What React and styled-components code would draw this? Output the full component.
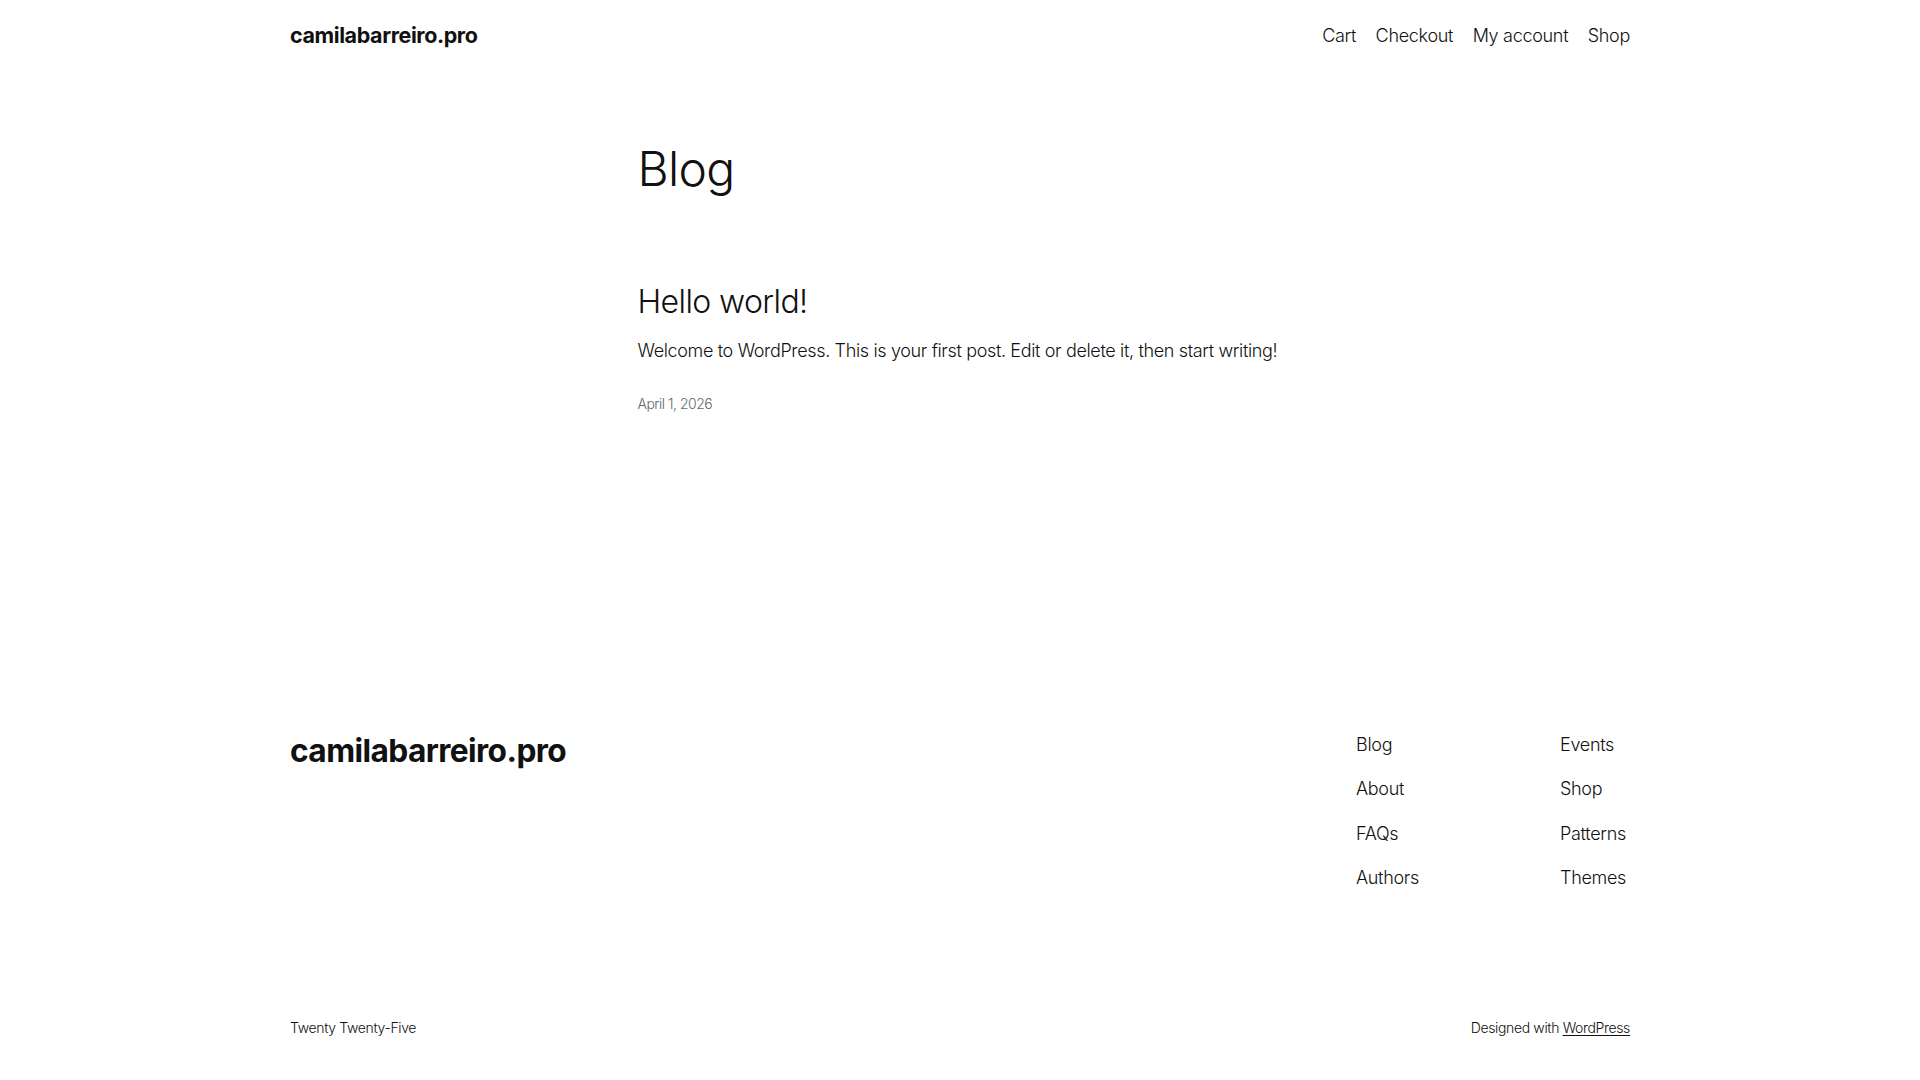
import React from 'react';
import styled, { createGlobalStyle } from 'styled-components';

const GlobalStyle = createGlobalStyle`
  * { box-sizing: border-box; }
  html, body {
    margin: 0;
    padding: 0;
    background: #ffffff;
  }
  body {
    font-family: Inter, "Noto Sans", "Liberation Sans", sans-serif;
    color: #111111;
    font-size: 18px;
    line-height: 1.4;
    letter-spacing: -0.1px;
    -webkit-font-smoothing: antialiased;
  }
  a { color: inherit; text-decoration: none; }
`;

const Page = styled.div`
  width: 100%;
  min-height: 1080px;
  display: flex;
  flex-direction: column;
`;

const Wide = styled.div`
  width: 1340px;
  margin: 0 auto;
`;

const Header = styled(Wide)`
  display: flex;
  align-items: center;
  justify-content: space-between;
  padding-top: 23px;
`;

const SiteTitle = styled.a`
  font-size: ${p => p.$size}px;
  font-weight: 700;
  line-height: 1.2;
  letter-spacing: ${p => p.$spacing}px;
`;

const Nav = styled.nav`
  display: flex;
  gap: 19.5px;
  font-size: 18px;
  font-weight: 300;
  line-height: 1.4;
  letter-spacing: -0.3px;
`;

const Main = styled.main`
  width: 645px;
  margin: 0 auto;
  padding-top: 93px;
  flex: 1;
`;

const PageTitle = styled.h1`
  margin: 0;
  font-size: 48px;
  font-weight: 300;
  line-height: 1.125;
  letter-spacing: -0.7px;
`;

const Post = styled.article`
  margin-top: 88px;
`;

const PostTitle = styled.h2`
  margin: 0;
  font-size: 32px;
  font-weight: 300;
  line-height: 1.125;
  letter-spacing: -0.6px;
`;

const Excerpt = styled.p`
  margin: 18px 0 0;
  font-size: 18px;
  font-weight: 300;
  line-height: 1.4;
  letter-spacing: -0.35px;
`;

const PostDate = styled.div`
  margin-top: 31px;
  font-size: 14px;
  font-weight: 300;
  line-height: 1.4;
  color: #686868;
  letter-spacing: -0.5px;
`;

const Footer = styled(Wide)`
  display: flex;
  justify-content: space-between;
  align-items: flex-start;
`;

const FooterNavs = styled.div`
  display: flex;
`;

const FooterColumn = styled.ul`
  list-style: none;
  margin: 0;
  padding: 0;
  width: ${p => p.$width}px;
  display: flex;
  flex-direction: column;
  gap: 19.2px;
  font-size: 18px;
  font-weight: 300;
  line-height: 1.4;
  letter-spacing: -0.3px;
  white-space: nowrap;
`;

const BottomBar = styled(Wide)`
  display: flex;
  justify-content: space-between;
  font-size: 14px;
  font-weight: 300;
  line-height: 1.4;
  letter-spacing: -0.35px;
  margin-top: 128px;
  padding-bottom: 42px;
`;

const Underlined = styled.a`
  text-decoration: underline;
  text-underline-offset: 2px;
  text-decoration-thickness: 1px;
`;

const headerLinks = ['Cart', 'Checkout', 'My account', 'Shop'];
const footerLeft = ['Blog', 'About', 'FAQs', 'Authors'];
const footerRight = ['Events', 'Shop', 'Patterns', 'Themes'];

export default function App() {
  return (
    <>
      <GlobalStyle />
      <Page>
        <Header as="header">
          <SiteTitle href="#" $size={21.5} $spacing={-0.4}>camilabarreiro.pro</SiteTitle>
          <Nav>
            {headerLinks.map(l => <a key={l} href="#">{l}</a>)}
          </Nav>
        </Header>

        <Main>
          <PageTitle>Blog</PageTitle>
          <Post>
            <PostTitle>Hello world!</PostTitle>
            <Excerpt>Welcome to WordPress. This is your first post. Edit or delete it, then start writing!</Excerpt>
            <PostDate>April 1, 2026</PostDate>
          </Post>
        </Main>

        <Footer as="footer">
          <SiteTitle href="#" $size={31.7} $spacing={-0.6}>camilabarreiro.pro</SiteTitle>
          <FooterNavs>
            <FooterColumn $width={204}>
              {footerLeft.map(l => <li key={l}><a href="#">{l}</a></li>)}
            </FooterColumn>
            <FooterColumn $width={70}>
              {footerRight.map(l => <li key={l}><a href="#">{l}</a></li>)}
            </FooterColumn>
          </FooterNavs>
        </Footer>

        <BottomBar>
          <span>Twenty Twenty-Five</span>
          <span>Designed with <Underlined href="#">WordPress</Underlined></span>
        </BottomBar>
      </Page>
    </>
  );
}
